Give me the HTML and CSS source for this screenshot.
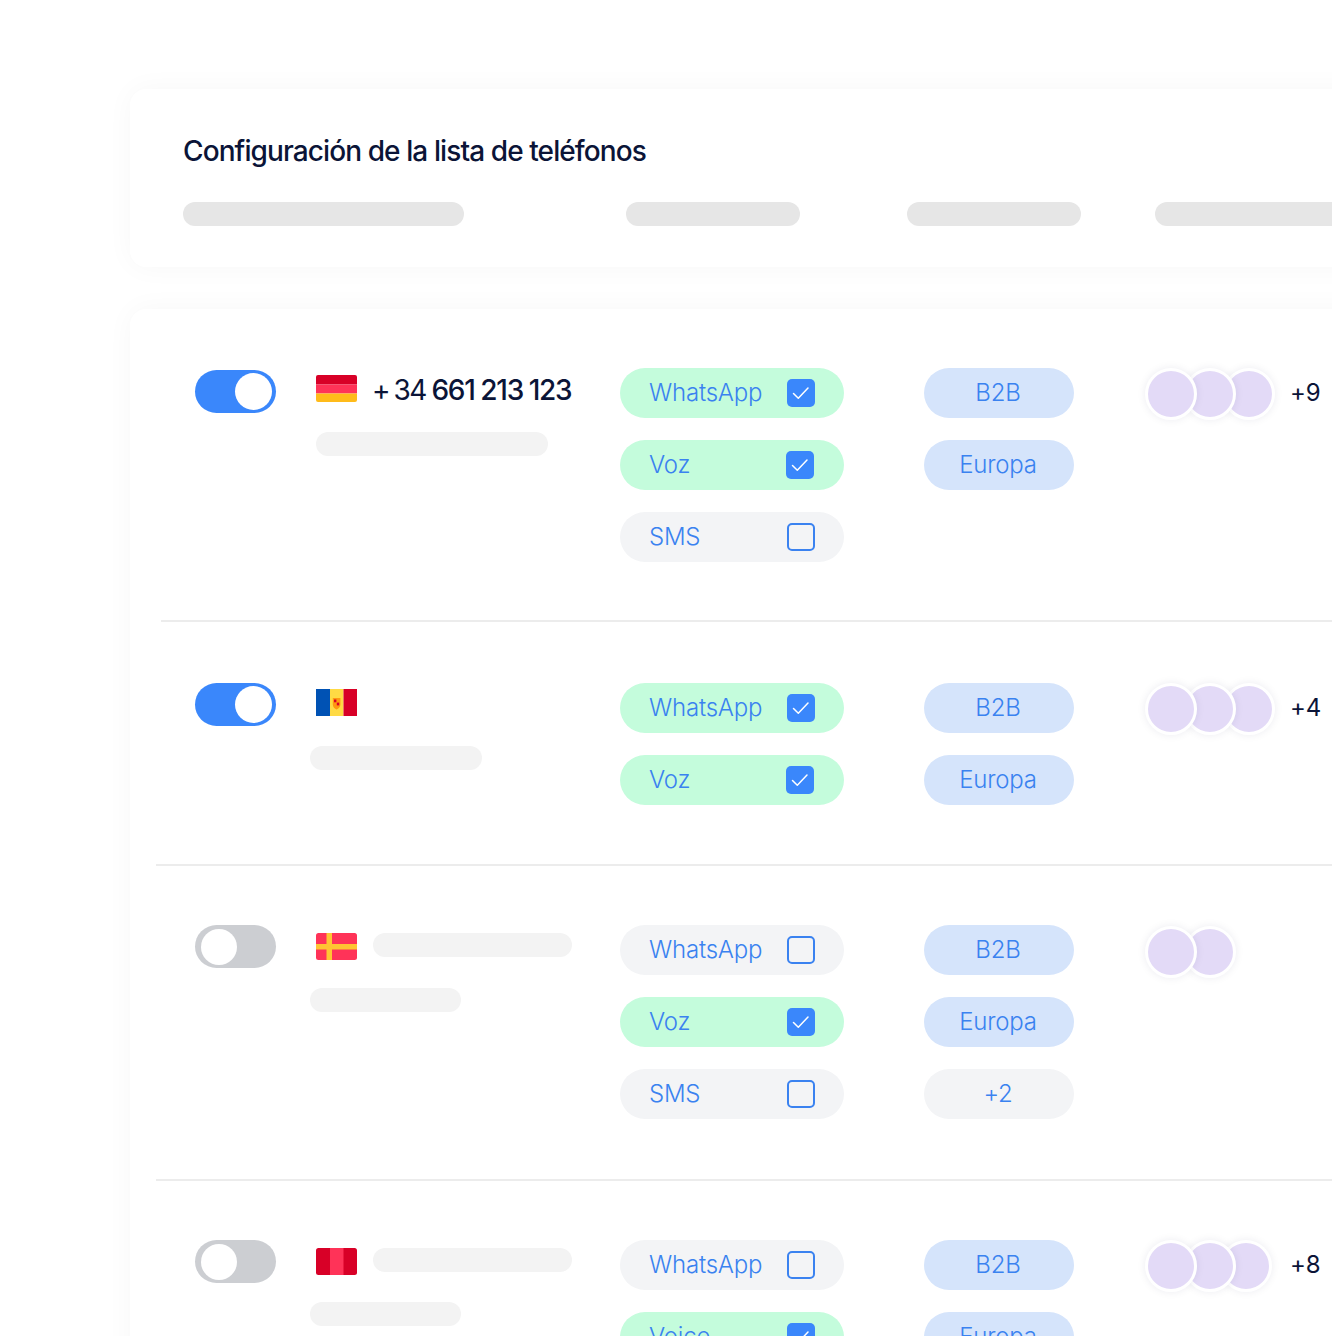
FILE: index.html
```html
<!DOCTYPE html>
<html lang="es">
<head>
<meta charset="utf-8">
<title>Configuración de la lista de teléfonos</title>
<link rel="stylesheet" href="styles.css">
</head>
<body>
<svg class="defs" width="0" height="0" aria-hidden="true">
  <symbol id="check" viewBox="0 0 28 28"><path d="M6.500 14.500l4.800 4.800 9.700-10.300" fill="none" stroke="#fff" stroke-width="1.500" stroke-linecap="round" stroke-linejoin="round"/></symbol>
</svg>
<main class="page">
  <section class="card head-card">
    <h1 class="title">Configuración de la lista de teléfonos</h1>
    <div class="head-bars">
      <span class="bar dark w281"></span>
      <span class="bar dark w174"></span>
      <span class="bar dark w174"></span>
      <span class="bar dark w300"></span>
    </div>
  </section>

  <section class="card list-card">
    <!-- row 1 -->
    <article class="row r1">
      <div class="toggle on"><span class="knob"></span></div>
      <div class="name">
        <div class="name-head">
          <svg class="flag" viewBox="0 0 41 27"><defs><clipPath id="f1"><rect width="41" height="27" rx="2"/></clipPath></defs><g clip-path="url(#f1)"><rect width="41" height="9.500" fill="#d80027"/><rect y="9.500" width="41" height="9" fill="#ff3358"/><rect y="18.500" width="41" height="8.500" fill="#ffbb1a"/></g></svg>
          <span class="phone">+ 34 <b>661 213 123</b></span>
        </div>
        <span class="bar sub w232"></span>
      </div>
      <div class="channels">
        <div class="pill green">WhatsApp<span class="box checked"><svg class="tick"><use href="#check"/></svg></span></div>
        <div class="pill green">Voz<span class="box checked"><svg class="tick"><use href="#check"/></svg></span></div>
        <div class="pill grey">SMS<span class="box"></span></div>
      </div>
      <div class="tags">
        <div class="tag">B2B</div>
        <div class="tag">Europa</div>
      </div>
      <div class="people">
        <span class="avatar"></span><span class="avatar"></span><span class="avatar"></span>
        <span class="more">+9</span>
      </div>
    </article>

    <!-- row 2 -->
    <article class="row r2">
      <div class="toggle on"><span class="knob"></span></div>
      <div class="name">
        <div class="name-head">
          <svg class="flag" viewBox="0 0 41 27"><rect width="14" height="27" fill="#0052b4"/><rect x="14" width="13.500" height="27" fill="#ffda44"/><rect x="27.500" width="13.500" height="27" fill="#d80027"/><path d="M16.800 9h7.600v6.500c0 2.600-2 4.200-3.800 5-1.800-.8-3.800-2.400-3.800-5z" fill="#ff9811"/><rect x="18" y="10.500" width="2.400" height="2.800" fill="#d80027"/><rect x="20.800" y="13.600" width="2.400" height="2.800" fill="#d80027"/></svg>
        </div>
        <span class="bar sub w172 shift"></span>
      </div>
      <div class="channels">
        <div class="pill green">WhatsApp<span class="box checked"><svg class="tick"><use href="#check"/></svg></span></div>
        <div class="pill green">Voz<span class="box checked"><svg class="tick"><use href="#check"/></svg></span></div>
      </div>
      <div class="tags">
        <div class="tag">B2B</div>
        <div class="tag">Europa</div>
      </div>
      <div class="people">
        <span class="avatar"></span><span class="avatar"></span><span class="avatar"></span>
        <span class="more">+4</span>
      </div>
    </article>

    <!-- row 3 -->
    <article class="row r3">
      <div class="toggle off"><span class="knob"></span></div>
      <div class="name">
        <div class="name-head">
          <svg class="flag" viewBox="0 0 41 27"><defs><clipPath id="f3"><rect width="41" height="27" rx="2.500"/></clipPath></defs><g clip-path="url(#f3)"><rect width="41" height="27" fill="#ff3358"/><rect x="10.500" width="5.500" height="27" fill="#ffc533"/><rect y="11" width="41" height="5.500" fill="#ffc533"/></g></svg>
          <span class="bar sub w199"></span>
        </div>
        <span class="bar sub w151 shift"></span>
      </div>
      <div class="channels">
        <div class="pill grey">WhatsApp<span class="box"></span></div>
        <div class="pill green">Voz<span class="box checked"><svg class="tick"><use href="#check"/></svg></span></div>
        <div class="pill grey">SMS<span class="box"></span></div>
      </div>
      <div class="tags">
        <div class="tag">B2B</div>
        <div class="tag">Europa</div>
        <div class="tag neutral">+2</div>
      </div>
      <div class="people">
        <span class="avatar"></span><span class="avatar"></span>
      </div>
    </article>

    <!-- row 4 -->
    <article class="row r4">
      <div class="toggle off"><span class="knob"></span></div>
      <div class="name">
        <div class="name-head">
          <svg class="flag" viewBox="0 0 41 27"><defs><clipPath id="f4"><rect width="41" height="27" rx="2.500"/></clipPath></defs><g clip-path="url(#f4)"><rect width="41" height="27" fill="#d80027"/><rect x="14" width="13.500" height="27" fill="#ff3358"/></g></svg>
          <span class="bar sub w199"></span>
        </div>
        <span class="bar sub w151 shift"></span>
      </div>
      <div class="channels">
        <div class="pill grey">WhatsApp<span class="box"></span></div>
        <div class="pill green">Voice<span class="box checked"><svg class="tick"><use href="#check"/></svg></span></div>
      </div>
      <div class="tags">
        <div class="tag">B2B</div>
        <div class="tag">Europa</div>
      </div>
      <div class="people">
        <span class="avatar"></span><span class="avatar"></span><span class="avatar"></span>
        <span class="more">+8</span>
      </div>
    </article>
  </section>
</main>
</body>
</html>
```
FILE: styles.css
```css
* { box-sizing: border-box; }
html, body { margin: 0; padding: 0; background: #fff; }
body { height: 1336px; overflow: hidden; font-family: Inter, "Liberation Sans", sans-serif; }
.defs { display: block; height: 0; }
.page { padding: 89px 0 0 130px; width: 1500px; }

.card { background: #fff; border-radius: 16px; box-shadow: 0 0 28px rgba(20, 20, 60, .035); }
.head-card { height: 178px; padding: 42px 0 0 53px; margin-bottom: 42px; }
.title { margin: 0; font-size: 28px; line-height: 40px; font-weight: 500; letter-spacing: -.9px; color: #0b1437; }
.head-bars { display: grid; grid-template-columns: 443px 281px 248px 1fr; margin-top: 31px; }

.bar { display: block; height: 24px; border-radius: 12px; background: #f3f3f3; flex: none; }
.bar.dark { background: #e6e6e6; }
.w281 { width: 281px; } .w174 { width: 174px; } .w300 { width: 300px; }
.w232 { width: 232px; } .w172 { width: 172px; } .w151 { width: 151px; } .w199 { width: 199px; }
.shift { margin-left: -6px; }

.list-card { height: 1100px; }
.row { display: flex; align-items: flex-start; margin-left: 26px; padding: 59px 0 60px 39px; border-bottom: 2px solid #ececec; }
.r1 { margin-left: 31px; padding-left: 34px; padding-bottom: 58px; }
.r2 { padding-top: 61px; padding-bottom: 59px; }
.r3 { padding-bottom: 60px; }
.r4 { border-bottom: 0; }

.toggle { width: 81px; height: 43px; border-radius: 22px; padding: 3px 4px; flex: none; display: flex; }
.toggle.on { background: #3a87fb; justify-content: flex-end; }
.toggle.off { background: #ccced2; padding: 4px 6px; }
.knob { width: 37px; height: 37px; border-radius: 50%; background: #fff; }
.toggle.off .knob { width: 36px; height: 36px; }
.r1 .toggle { margin-top: 2px; }

.name { width: 304px; margin-left: 40px; flex: none; }
.name-head { display: flex; align-items: flex-start; gap: 16px; height: 27px; }
.r1 .name { padding-top: 7px; }
.r2 .name { padding-top: 6px; }
.r3 .name, .r4 .name { padding-top: 8px; }
.r1 .name > .bar { margin-top: 30px; }
.r2 .name > .bar { margin-top: 30px; }
.r3 .name > .bar { margin-top: 28px; }
.r4 .name > .bar { margin-top: 27px; }
.flag { width: 41px; height: 27px; flex: none; display: block; }
.phone { font-size: 28px; line-height: 28px; letter-spacing: -1.45px; word-spacing: -2px; margin-left: -1px; padding-top: 1px; color: #0b1437; white-space: nowrap; font-weight: 400; }
.phone b { font-weight: 500; letter-spacing: -1.25px; word-spacing: -.5px; margin-left: 1px; }

.channels { width: 304px; flex: none; display: flex; flex-direction: column; gap: 22px; }
.pill { width: 224px; height: 50px; border-radius: 25px; display: flex; align-items: center; justify-content: space-between; padding: 0 29px 2px 29px; font-size: 24px; letter-spacing: -.2px; color: #3a82f0; font-weight: 350; }
.pill.green { background: #c4fcdc; }
.pill.grey { background: #f3f4f6; }
.pill.green + .pill.green .box { margin-right: 1px; }
.box { width: 28px; height: 28px; border-radius: 5px; border: 2px solid #3a82f0; flex: none; margin-top: 2px; }
.box.checked { background: #3a87fb; border: 0; }
.tick { display: block; width: 28px; height: 28px; }

.tags { width: 221px; flex: none; display: flex; flex-direction: column; gap: 22px; }
.tag { width: 150px; height: 50px; border-radius: 25px; background: #d5e4fb; color: #3a82f0; display: flex; align-items: center; justify-content: center; padding: 0 2px 2px 0; font-size: 24px; letter-spacing: -.2px; font-weight: 350; }
.tag.neutral { background: #f3f4f6; }

.people { display: flex; align-items: center; height: 52px; }
.avatar { width: 52px; height: 52px; border-radius: 50%; background: #e3daf7; border: 3px solid #fff; box-shadow: 0 0 8px rgba(30, 20, 80, .08); flex: none; margin-right: -13px; position: relative; }
.avatar:nth-child(1) { z-index: 3; }
.avatar:nth-child(2) { z-index: 2; }
.avatar:nth-child(3) { z-index: 1; }
.more { margin-left: 28px; font-size: 24px; letter-spacing: -.2px; color: #0b1437; font-weight: 400; padding-bottom: 4px; }
.r3 .people { margin-top: 1px; }
.r4 .avatar:nth-child(2) { margin-right: -16px; }
.r4 .more { margin-left: 31px; }
```
